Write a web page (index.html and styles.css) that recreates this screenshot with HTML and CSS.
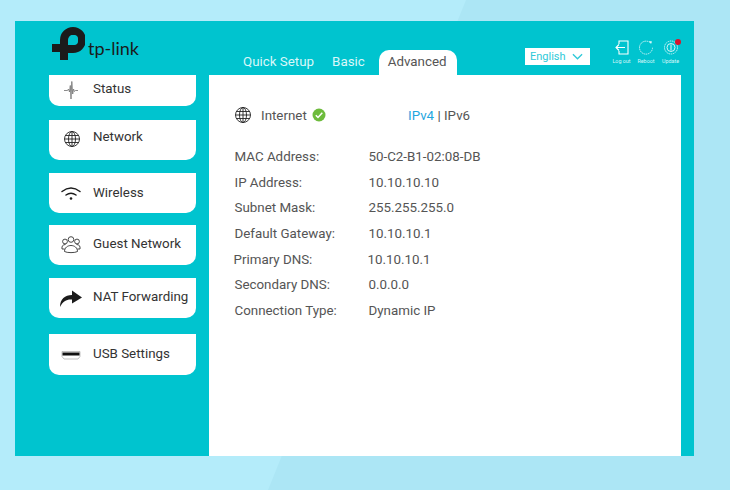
FILE: index.html
```html
<!DOCTYPE html>
<html lang="en">
<head>
<meta charset="utf-8">
<title>TP-Link Router</title>
<link rel="stylesheet" href="styles.css">
</head>
<body>
<div class="frame">
  <header class="header">
    <div class="logo">
      <svg class="logo-mark" viewBox="0 0 33 33" width="33" height="33"><path d="M0 17H16V33H8V25H0Z" fill="#1b1b1b"/><path d="M12 17V13A9 9 0 1 1 21 22H16" fill="none" stroke="#1b1b1b" stroke-width="8"/><rect x="17" y="8" width="9" height="10" rx="4" fill="#00c4cf"/></svg>
      <span class="logo-text">tp-link</span>
    </div>
    <nav class="tabs">
      <a class="tab">Quick Setup</a>
      <a class="tab">Basic</a>
      <a class="tab active">Advanced</a>
    </nav>
    <div class="lang"><span>English</span>
      <svg viewBox="0 0 12 7" width="11" height="7"><path d="M1 1L6 6L11 1" fill="none" stroke="#2ec9d8" stroke-width="1.4"/></svg>
    </div>
    <div class="tools">
      <div class="tool">
        <svg viewBox="0 0 16 15" width="16" height="15"><path d="M5 4V1H14V14H5V11M11 7.500H2M5 4.500L2 7.500L5 10.500" fill="none" stroke="#fff" stroke-width="1.1"/></svg>
        <span>Log out</span>
      </div>
      <div class="tool">
        <svg viewBox="0 0 16 15" width="16" height="15"><path d="M12 2.500A6.500 6.500 0 1 0 14.500 7.500" fill="none" stroke="#c9f3f6" stroke-width="1" stroke-dasharray="1.500 .7"/><path d="M11 1L14 1.500L13 4Z" fill="#e6fafb"/></svg>
        <span>Reboot</span>
      </div>
      <div class="tool update">
        <svg viewBox="0 0 16 15" width="16" height="15"><circle cx="8" cy="7.500" r="6.500" fill="none" stroke="#c9f3f6" stroke-width="1" stroke-dasharray="1.500 .7"/><circle cx="8" cy="7.500" r="4" fill="none" stroke="#e6fafb" stroke-width=".9"/><path d="M8 4.500V10.500" stroke="#e6fafb"/></svg>
        <span>Update</span>
        <i class="dot"></i>
      </div>
    </div>
  </header>
  <div class="body">
    <aside class="sidebar">
      <a class="card card-status">
        <svg class="ic" viewBox="0 0 22 22" width="22" height="22"><path d="M4 11.500H7.500L8.500 10L9.500 13L10.300 6.500L11 20L11.800 2.500L12.700 15L13.500 10L14.500 12.500L15.500 11.500H18" fill="none" stroke="#777" stroke-width=".85"/></svg>
        <span>Status</span>
      </a>
      <a class="card card-network">
        <svg class="ic" viewBox="0 0 22 22" width="22" height="22"><g fill="none" stroke="#222" stroke-width=".9"><circle cx="11" cy="11" r="7.500"/><ellipse cx="11" cy="11" rx="3.500" ry="7.500"/><path d="M11 3.500V18.500M3.500 11H18.500M4.500 7.500H17.500M4.500 14.500H17.500"/></g></svg>
        <span>Network</span>
      </a>
      <a class="card card-wireless">
        <svg class="ic" viewBox="0 0 22 22" width="22" height="22"><g fill="none" stroke="#1c1c1c" stroke-width="1.500" stroke-linecap="round"><path d="M2 9.500Q11 2.500 20 9.500"/><path d="M6 13Q11 9.500 16 13"/></g><circle cx="11" cy="16.500" r="1.300" fill="#1c1c1c"/></svg>
        <span>Wireless</span>
      </a>
      <a class="card card-guest">
        <svg class="ic" viewBox="0 0 22 22" width="22" height="22"><g fill="none" stroke="#333" stroke-width=".9"><circle cx="11" cy="6.500" r="2.800"/><circle cx="5" cy="8.500" r="2.400"/><circle cx="17" cy="8.500" r="2.400"/><path d="M4.500 18.500C4.500 10.500 17.500 10.500 17.500 18.500C15 20 7 20 4.500 18.500Z"/><path d="M4.500 16H2C1.500 13 3 11.500 5.500 11.500M17.500 16H20C20.500 13 19 11.500 16.500 11.500"/></g></svg>
        <span>Guest Network</span>
      </a>
      <a class="card card-nat">
        <svg class="ic" viewBox="0 0 22 22" width="22" height="22"><path d="M0 20C0 12 5 8 12 8V3.500L22 10.500L12 16.500V12.500C7 12 3 14 0 20Z" fill="#1b1b1b"/></svg>
        <span>NAT Forwarding</span>
      </a>
      <a class="card card-usb">
        <svg class="ic" viewBox="0 0 22 22" width="22" height="22"><path d="M2 7.500H20V12.500L18 15H4L2 12.500Z" fill="#fff" stroke="#999" stroke-width=".6"/><rect x="2.500" y="8.500" width="17" height="3" fill="#111"/></svg>
        <span>USB Settings</span>
      </a>
    </aside>
    <main class="panel">
      <div class="net-head">
        <svg class="net-globe" viewBox="0 0 18 18" width="18" height="18"><g fill="none" stroke="#222" stroke-width=".9"><circle cx="9" cy="9" r="7.500"/><ellipse cx="9" cy="9" rx="3.500" ry="7.500"/><path d="M9 1.500V16.500M1.500 9H16.500M2.500 5.500H15.500M2.500 12.500H15.500"/></g></svg>
        <span class="net-title">Internet</span>
        <svg class="net-check" viewBox="0 0 14 14" width="14" height="14"><circle cx="7" cy="7" r="6.500" fill="#6dbb3c"/><path d="M3.800 7.200L6 9.500L10.300 4.800" fill="none" stroke="#fff" stroke-width="1.500"/></svg>
        <span class="net-ip"><a class="ip-on">IPv4</a> | IPv6</span>
      </div>
      <div class="info">
        <div class="row"><span>MAC Address:</span><span>50-C2-B1-02:08-DB</span></div>
        <div class="row"><span>IP Address:</span><span>10.10.10.10</span></div>
        <div class="row"><span>Subnet Mask:</span><span>255.255.255.0</span></div>
        <div class="row"><span>Default Gateway:</span><span>10.10.10.1</span></div>
        <div class="row row-left"><span>Primary DNS:</span><span>10.10.10.1</span></div>
        <div class="row"><span>Secondary DNS:</span><span>0.0.0.0</span></div>
        <div class="row"><span>Connection Type:</span><span>Dynamic IP</span></div>
      </div>
    </main>
  </div>
</div>
</body>
</html>
```
FILE: styles.css
```css
* { box-sizing: border-box; }
html, body { margin: 0; height: 100%; }
body {
  position: relative;
  width: 730px;
  height: 490px;
  overflow: hidden;
  padding: 21px 0 0 15px;
  background: #ace6f5;
  font-family: Roboto, "Liberation Sans", sans-serif;
  font-size: 13.350px;
  color: #555;
}
body::before {
  content: "";
  position: absolute;
  inset: 0;
  background: #b4ecfa;
  clip-path: polygon(0 0, 466px 0, 268px 490px, 0 490px);
}
.frame {
  position: relative;
  width: 679px;
  height: 435px;
  background: #00c4cf;
  display: flex;
  flex-direction: column;
}
.header {
  height: 54px;
  flex: none;
  display: flex;
  align-items: flex-start;
}
.logo {
  width: 219px;
  flex: none;
  padding: 6px 0 0 37px;
  display: flex;
  align-items: flex-start;
  gap: 3px;
}
.logo-text {
  margin-top: 11px;
  font-family: Lato, sans-serif;
  font-size: 18px;
  line-height: 20px;
  color: #1b1b1b;
}
.tabs {
  display: flex;
  align-items: flex-end;
  height: 54px;
  width: 291px;
  flex: none;
  padding-left: 9px;
}
.tab {
  height: 25px;
  line-height: 23px;
  color: #d9f7f9;
  margin-right: 18px;
  white-space: nowrap;
}
.tab.active {
  background: #fff;
  color: #555;
  border-radius: 10px 10px 0 0;
  margin: 0 0 0 -4px;
  padding: 0 9px;
  width: 78px;
}
.lang {
  margin-top: 27px;
  width: 65px;
  height: 17px;
  background: #fff;
  color: #2ec9d8;
  font-size: 11px;
  line-height: 17px;
  padding: 0 7px 0 5px;
  display: flex;
  align-items: center;
  justify-content: space-between;
  flex: none;
}
.tools {
  margin: 19px 0 0 23.500px;
  display: flex;
  gap: 8.500px;
  flex: none;
}
.tool {
  position: relative;
  width: 16px;
  display: flex;
  flex-direction: column;
  align-items: center;
  color: #d9f7f9;
  font-size: 5.400px;
  line-height: 7px;
  white-space: nowrap;
}
.tool span { margin-top: 3px; }
.dot {
  position: absolute;
  top: -1px;
  right: -2px;
  width: 6px;
  height: 6px;
  border-radius: 50%;
  background: #d9142c;
}
.body {
  flex: 1;
  display: flex;
  min-height: 0;
}
.sidebar {
  width: 194px;
  flex: none;
  padding-left: 34px;
}
.card {
  width: 147px;
  height: 40px;
  background: #fff;
  border-radius: 0 0 10px 10px;
  display: flex;
  align-items: center;
  color: #333;
  white-space: nowrap;
}
.card .ic { margin: 0 11px; flex: none; }
.card-status { height: 31px; padding-bottom: 4px; }
.card-status .ic { margin-top: 2px; }
.card-network { margin-top: 14px; }
.card-network span { margin-top: -7px; }
.card-network .ic { margin: -2px 10px 0 12px; }
.card-wireless { margin-top: 13px; }
.card-wireless span { margin-top: -1px; }
.card-guest { margin-top: 12px; padding-bottom: 3px; }
.card-nat { margin-top: 13px; padding-bottom: 3px; }
.card-nat .ic { margin-top: 2px; }
.card-usb { margin-top: 16px; height: 41px; }
.card-usb span { margin-top: -2px; }
.panel {
  width: 472px;
  flex: none;
  background: #fff;
  padding: 30px 0 0 25px;
}
.net-head {
  display: flex;
  align-items: center;
  height: 20px;
}
.net-globe { flex: none; }
.net-title { margin-left: 9px; width: 51px; }
.net-check { flex: none; }
.net-ip { margin-left: 82px; }
.ip-on { color: #1fa7e0; }
.info { margin: 19px 0 0 0.500px; }
.row {
  display: grid;
  grid-template-columns: 134px 1fr;
  height: 25.700px;
  line-height: 25.700px;
}
.row-left { margin-left: -1px; }
```
